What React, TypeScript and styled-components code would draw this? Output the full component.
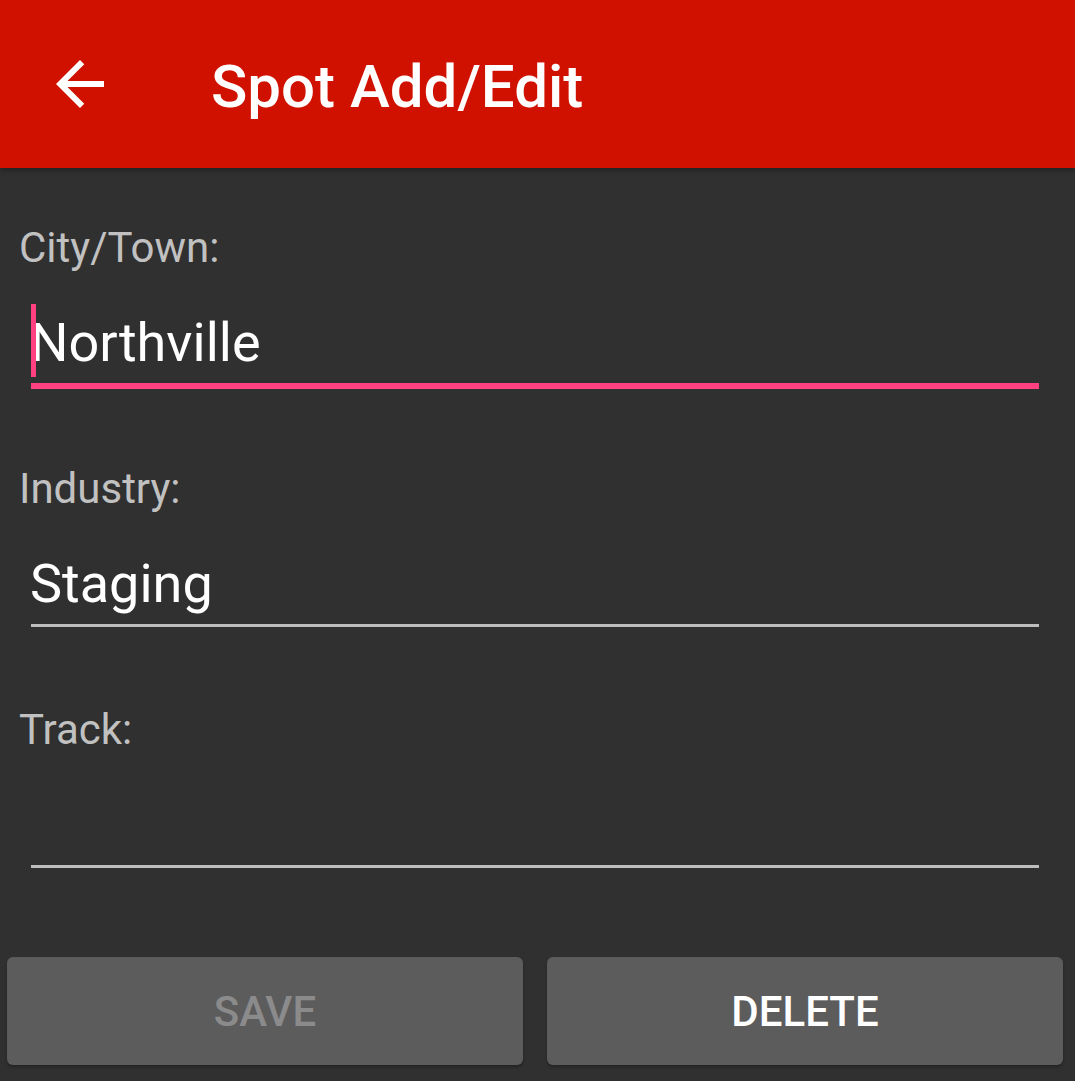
import { FC } from 'react'
import styled, { createGlobalStyle } from 'styled-components'

const GlobalStyle = createGlobalStyle`
  html, body {
    margin: 0;
    padding: 0;
    background: #303030;
  }
  body {
    font-family: Roboto, "Noto Sans", "Liberation Sans", sans-serif;
    -webkit-font-smoothing: antialiased;
  }
`

interface FieldProps {
  label: string
  value?: string
  focused?: boolean
}

const Field: FC<FieldProps> = ({ label, value, focused }) => (
  <FieldBox>
    <Label>{label}</Label>
    <InputLine $focused={focused}>
      {focused && <Caret />}
      <InputText>{value}</InputText>
    </InputLine>
  </FieldBox>
)

const BackArrow = () => (
  <svg width="72" height="72" viewBox="0 0 24 24" fill="#ffffff">
    <path d="M20 11H7.83l5.59-5.59L12 4l-8 8 8 8 1.41-1.41L7.83 13H20v-2z" />
  </svg>
)

const App: FC = () => {
  return (
    <Page>
      <GlobalStyle />
      <Toolbar>
        <NavButton>
          <BackArrow />
        </NavButton>
        <Title>Spot Add/Edit</Title>
      </Toolbar>
      <Form>
        <Field label="City/Town:" value="Northville" focused />
        <Field label="Industry:" value="Staging" />
        <Field label="Track:" />
      </Form>
      <ButtonRow>
        <ActionButton $disabled>Save</ActionButton>
        <ActionButton>Delete</ActionButton>
      </ButtonRow>
    </Page>
  )
}

const Page = styled.div`
  display: flex;
  flex-direction: column;
  height: 100vh;
  background: #303030;
  overflow: hidden;
`
const Toolbar = styled.div`
  position: relative;
  z-index: 1;
  display: flex;
  align-items: center;
  height: 168px;
  flex-shrink: 0;
  padding-left: 44px;
  background: #d01100;
  box-shadow: 0 2px 5px rgba(0, 0, 0, 0.35);
`
const NavButton = styled.div`
  display: flex;
  width: 72px;
  height: 72px;
  cursor: pointer;
`
const Title = styled.div`
  margin-left: 95px;
  padding-top: 6px;
  color: #ffffff;
  font-size: 60px;
  font-weight: 500;
  line-height: 72px;
  white-space: nowrap;
`
const Form = styled.div`
  flex: 1;
  padding: 52px 36px 0 19px;
`
const FieldBox = styled.div`
  margin-bottom: 75px;
`
const Label = styled.div`
  color: #c1c1c1;
  font-size: 42px;
  line-height: 56px;
`
const InputLine = styled.div<{ $focused?: boolean }>`
  position: relative;
  margin: 35px 0 0 12px;
  padding-bottom: 8px;
  border-bottom: 3px solid ${(p) => (p.$focused ? '#ff4081' : '#bdbdbd')};
  box-shadow: ${(p) => (p.$focused ? '0 3px 0 #ff4081' : 'none')};
`
const InputText = styled.div`
  min-height: 64px;
  margin-left: -1px;
  color: #ffffff;
  font-size: 54px;
  line-height: 64px;
  white-space: nowrap;
`
const Caret = styled.span`
  position: absolute;
  left: 0;
  top: -7px;
  width: 5px;
  height: 73px;
  background: #ff4081;
`
const ButtonRow = styled.div`
  display: grid;
  grid-template-columns: 1fr 1fr;
  gap: 24px;
  padding: 0 12px 16px 7px;
`
const ActionButton = styled.div<{ $disabled?: boolean }>`
  display: flex;
  align-items: center;
  justify-content: center;
  height: 108px;
  border-radius: 6px;
  background: #5c5c5d;
  box-shadow: 0 2px 3px rgba(0, 0, 0, 0.28);
  color: ${(p) => (p.$disabled ? '#8b8b8c' : '#ffffff')};
  font-size: 42px;
  font-weight: 500;
  text-transform: uppercase;
  cursor: ${(p) => (p.$disabled ? 'default' : 'pointer')};
`

export default App
